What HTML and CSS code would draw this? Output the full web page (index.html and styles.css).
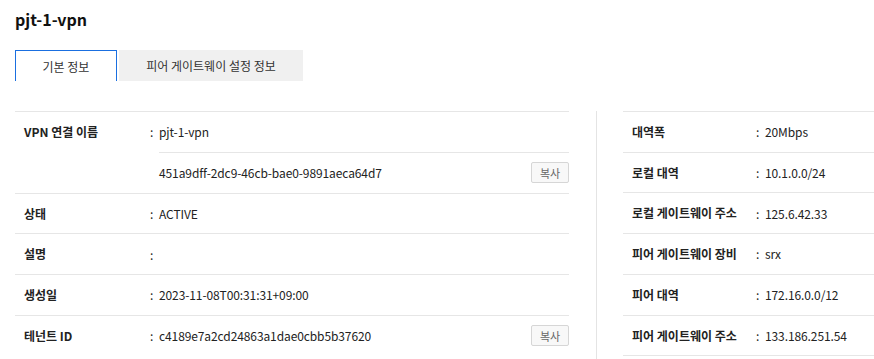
FILE: index.html
```html
<!DOCTYPE html>
<html>
<head>
    <link rel="stylesheet" href="styles.css">
</head>
<body>
    <h1 class="title">pjt-1-vpn</h1>

    <div class="tabs">
        <div class="tab active">기본 정보</div>
        <div class="tab">피어 게이트웨이 설정 정보</div>
    </div>

    <div class="detail">
        <div class="panel left">
            <div class="row">
                <div class="label">VPN 연결 이름</div>
                <div class="values">
                    <div class="value-line"><span class="colon">:</span>pjt-1-vpn</div>
                    <div class="value-line sub">
                        <span>451a9dff-2dc9-46cb-bae0-9891aeca64d7</span>
                        <button class="copy">복사</button>
                    </div>
                </div>
            </div>
            <div class="row">
                <div class="label">상태</div>
                <div class="value-line"><span class="colon">:</span>ACTIVE</div>
            </div>
            <div class="row">
                <div class="label">설명</div>
                <div class="value-line"><span class="colon">:</span></div>
            </div>
            <div class="row">
                <div class="label">생성일</div>
                <div class="value-line"><span class="colon">:</span>2023-11-08T00:31:31+09:00</div>
            </div>
            <div class="row">
                <div class="label">테넌트 ID</div>
                <div class="value-line split">
                    <span><span class="colon">:</span>c4189e7a2cd24863a1dae0cbb5b37620</span>
                    <button class="copy">복사</button>
                </div>
            </div>
        </div>

        <div class="divider"></div>

        <div class="panel right">
            <div class="row">
                <div class="label">대역폭</div>
                <div class="value-line"><span class="colon">:</span>20Mbps</div>
            </div>
            <div class="row">
                <div class="label">로컬 대역</div>
                <div class="value-line"><span class="colon">:</span>10.1.0.0/24</div>
            </div>
            <div class="row">
                <div class="label">로컬 게이트웨이 주소</div>
                <div class="value-line"><span class="colon">:</span>125.6.42.33</div>
            </div>
            <div class="row">
                <div class="label">피어 게이트웨이 장비</div>
                <div class="value-line"><span class="colon">:</span>srx</div>
            </div>
            <div class="row">
                <div class="label">피어 대역</div>
                <div class="value-line"><span class="colon">:</span>172.16.0.0/12</div>
            </div>
            <div class="row">
                <div class="label">피어 게이트웨이 주소</div>
                <div class="value-line"><span class="colon">:</span>133.186.251.54</div>
            </div>
        </div>
    </div>
</body>
</html>
```

FILE: styles.css
```css
body {
    margin: 0;
    padding: 0 0 0 15px;
    font-family: "Noto Sans CJK KR", "Noto Sans", sans-serif;
    font-size: 12px;
    color: #222;
    background: #fff;
    overflow: hidden;
}

.title {
    margin: 0;
    padding-top: 7px;
    height: 43px;
    font-size: 16px;
    font-weight: bold;
    line-height: 24px;
    color: #111;
}

.tabs {
    display: flex;
    gap: 2px;
    height: 31px;
}

.tab {
    display: flex;
    align-items: center;
    justify-content: center;
    background: #f0f0f0;
    color: #333;
    font-size: 12px;
    width: 184px;
    box-sizing: border-box;
    white-space: nowrap;
}

.tab.active {
    width: 102px;
    background: #fff;
    border: 1px solid #1a6fe0;
    border-bottom: none;
}

.detail {
    display: flex;
    margin-top: 30px;
}

.panel.left {
    width: 554px;
}

.divider {
    width: 1px;
    background: #e4e4e4;
    margin-left: 27px;
    margin-right: 26px;
    height: 260px;
}

.panel.right {
    flex: 1;
}

.row {
    display: flex;
    border-top: 1px solid #e6e6e6;
}

.panel.right .row:last-child {
    border-bottom: 1px solid #e6e6e6;
}

.label {
    width: 126px;
    padding-left: 9px;
    font-weight: bold;
    line-height: 39.7px;
    color: #222;
    white-space: nowrap;
}

.right .label {
    width: 124px;
}

.values {
    flex: 1;
}

.value-line {
    flex: 1;
    display: flex;
    align-items: center;
    height: 39.7px;
    letter-spacing: -0.1px;
}

.value-line.sub {
    justify-content: space-between;
    border-top: 1px solid #e6e6e6;
    margin-left: 9px;
    height: 40px;
}

.value-line.split {
    justify-content: space-between;
}

.colon {
    display: inline-block;
    width: 9px;
}

.copy {
    font-family: inherit;
    font-size: 11px;
    color: #666;
    background: #f8f8f8;
    border: 1px solid #d6d6d6;
    border-radius: 2px;
    height: 21px;
    width: 38px;
    padding: 0;
    cursor: pointer;
}
```
